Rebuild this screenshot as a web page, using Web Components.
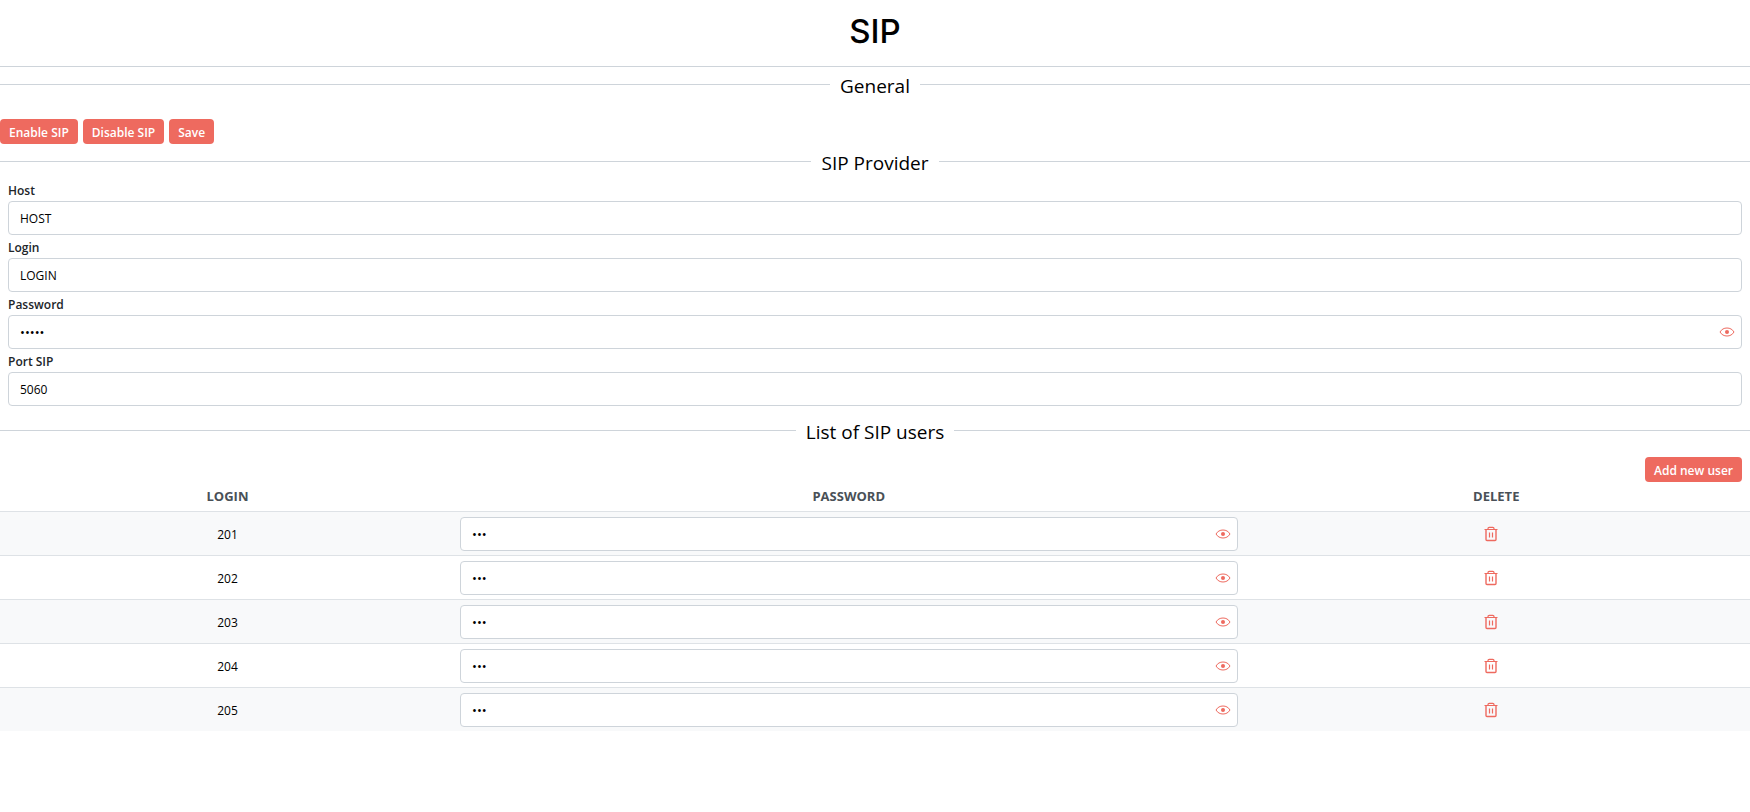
<!DOCTYPE html>
<html lang="en">
<head>
<meta charset="utf-8">
<meta name="viewport" content="width=device-width, initial-scale=1">
<title>SIP</title>
<style>
    body {
        margin: 0;
        background: #ffffff;
        color: #000000;
        font-family: 'Open Sans', 'Noto Sans', sans-serif;
        font-size: 12px;

        --accent:      #ee6a5f;
        --line:        #ced4da;
        --rowLine:     #dee2e6;
        --rowStripe:   #f8f9fa;
        --labelColour: #212529;
        --headColour:  #495057;
    }
</style>
</head>
<body>

<sip-page></sip-page>

<script>
// ╭───────────────────────────────────────────────────────╮
// │                        HELPERS                        │
// ╰───────────────────────────────────────────────────────╯
function makeTemplate(html) {
    const template = document.createElement('template');
    template.innerHTML = html;
    return template;
}

function attach(element, template) {
    element.attachShadow({ mode: "open" });
    element.shadowRoot.appendChild(template.content.cloneNode(true));
}

// ╭───────────────────────────────────────────────────────╮
// │                        BUTTON                         │
// ╰───────────────────────────────────────────────────────╯
const buttonTemplate = makeTemplate(/* html */`
    <style>
        :host {
            display: block;
        }

        button {
            /* Size  */
            display: block;
            height: 25px;
            padding: 2px 9px 0;
            border: 0;
            border-radius: 4px;

            /* Presentation  */
            background: var(--accent);
            color: #ffffff;
            font: inherit;
            font-weight: 600;
            white-space: nowrap;
            cursor: pointer;
        }

        button:hover {
            filter: brightness(0.95);
        }
    </style>
    <button type="button"><slot></slot></button>
`);

class ActionButton extends HTMLElement {
    constructor() {
        super();
        attach(this, buttonTemplate);
    }
}
customElements.define("action-button", ActionButton);

// ╭───────────────────────────────────────────────────────╮
// │                    SECTION DIVIDER                    │
// ╰───────────────────────────────────────────────────────╯
const dividerTemplate = makeTemplate(/* html */`
    <style>
        :host {
            /* Position */
            display: flex;
            align-items: center;
            gap: 10px;
        }

        :host::before,
        :host::after {
            content: "";
            flex: 1;
            border-top: 1px solid var(--line);
        }

        h2 {
            margin: 0;
            padding-top: 4px;
            font-size: 19px;
            font-weight: 400;
            line-height: 30px;
        }
    </style>
    <h2><slot></slot></h2>
`);

class SectionDivider extends HTMLElement {
    constructor() {
        super();
        attach(this, dividerTemplate);
    }
}
customElements.define("section-divider", SectionDivider);

// ╭───────────────────────────────────────────────────────╮
// │                      TEXT FIELD                       │
// ╰───────────────────────────────────────────────────────╯
const fieldTemplate = makeTemplate(/* html */`
    <style>
        :host {
            display: block;
        }

        label {
            display: block;
            padding-top: 2px;
            color: var(--labelColour);
            font-weight: 600;
            line-height: 21px;
        }

        label[hidden],
        button[hidden] {
            display: none;
        }

        .box {
            /* Position */
            display: flex;
            align-items: center;

            /* Size  */
            box-sizing: border-box;
            height: 34px;
            padding-right: 4px;
            border: 1px solid var(--line);
            border-radius: 4px;

            /* Presentation  */
            background: #ffffff;
        }

        .box:focus-within {
            border-color: var(--accent);
        }

        input {
            flex: 1;
            min-width: 0;
            height: 100%;
            box-sizing: border-box;
            padding: 0 11px;
            border: 0;
            outline: 0;
            background: transparent;
            color: inherit;
            font: inherit;
        }

        input[type="password"] {
            font-size: 13px;
        }

        button {
            display: flex;
            align-items: center;
            justify-content: center;
            width: 20px;
            height: 20px;
            padding: 0;
            border: 0;
            background: transparent;
            color: var(--accent);
            cursor: pointer;
        }
    </style>
    <label for="input"></label>
    <div class="box">
        <input id="input" type="text" autocomplete="off">
        <button type="button" aria-label="Show password" hidden>
            <svg width="16" height="16" viewBox="0 0 16 16" fill="none">
                <path d="M1 8C2.600 5.300 5 4 8 4S13.400 5.300 15 8C13.400 10.700 11 12 8 12S2.600 10.700 1 8Z" stroke="currentColor"/>
                <circle cx="8" cy="8" r="2" fill="currentColor"/>
            </svg>
        </button>
    </div>
`);

class SipField extends HTMLElement {
    constructor() {
        super();
        attach(this, fieldTemplate);
    }

    connectedCallback() {
        const label = this.shadowRoot.querySelector("label");
        const input = this.shadowRoot.querySelector("input");
        const toggle = this.shadowRoot.querySelector("button");

        // label
        label.textContent = this.getAttribute("label");
        if (this.hasAttribute("nolabel")) {
            label.hidden = true;
            input.setAttribute("aria-label", this.getAttribute("label"));
        }

        input.value = this.getAttribute("value");

        // password
        if (this.hasAttribute("password")) {
            input.type = "password";
            toggle.hidden = false;
            toggle.addEventListener("click", () => {
                input.type = input.type === "password" ? "text" : "password";
            });
        }
    }
}
customElements.define("sip-field", SipField);

// ╭───────────────────────────────────────────────────────╮
// │                      USERS TABLE                      │
// ╰───────────────────────────────────────────────────────╯
const tableTemplate = makeTemplate(/* html */`
    <style>
        :host {
            display: block;
        }

        table {
            width: 100%;
            table-layout: fixed;
            border-collapse: separate;
            border-spacing: 0;
            text-align: center;
        }

        .login    { width: 26%; }
        .password { width: 45%; }
        .delete   { width: 29%; }

        th {
            padding: 0;
            color: var(--headColour);
            font-size: 13px;
            font-weight: 700;
            line-height: 29px;
        }

        td {
            padding: 5px 5px 4px;
            border-top: 1px solid var(--rowLine);
        }

        sip-field {
            text-align: left;
        }

        tbody tr:nth-child(odd) {
            background: var(--rowStripe);
        }

        button {
            display: block;
            width: 18px;
            height: 18px;
            margin: 0 auto;
            padding: 0;
            border: 0;
            background: transparent;
            color: var(--accent);
            cursor: pointer;
        }

        .trash {
            padding-right: 15px;
        }

        svg {
            display: block;
            margin: 0 auto;
        }
    </style>
    <table>
        <thead>
            <tr>
                <th class="login" scope="col">LOGIN</th>
                <th class="password" scope="col">PASSWORD</th>
                <th class="delete" scope="col">DELETE</th>
            </tr>
        </thead>
        <tbody></tbody>
    </table>
`);

const rowTemplate = makeTemplate(/* html */`
    <tr>
        <td class="name"></td>
        <td><sip-field password nolabel></sip-field></td>
        <td class="trash">
            <button type="button">
                <svg width="14" height="16" viewBox="0 0 14 16" fill="none" stroke="currentColor" stroke-width="1.200">
                    <path d="M0.500 3.500H13.500M4 3.500V2.500Q4 1.300 5.200 1.300H8.800Q10 1.300 10 2.500V3.500"/>
                    <path d="M2 3.500V13.500Q2 14.500 3 14.500H11Q12 14.500 12 13.500V3.500" stroke-width="1.400"/>
                    <path d="M5.500 6.500V11.500M8.500 6.500V11.500"/>
                </svg>
            </button>
        </td>
    </tr>
`);

class SipUsers extends HTMLElement {
    constructor() {
        super();
        attach(this, tableTemplate);
    }

    connectedCallback() {
        this.getAttribute("users").split(" ").forEach(login => this.addUser(login));
    }

    addUser(login) {
        const row = rowTemplate.content.cloneNode(true).querySelector("tr");
        const field = row.querySelector("sip-field");
        const button = row.querySelector("button");

        row.querySelector(".name").textContent = login;
        field.setAttribute("label", "Password " + login);
        field.setAttribute("value", login);
        button.setAttribute("aria-label", "Delete " + login);
        button.addEventListener("click", () => row.remove());

        this.shadowRoot.querySelector("tbody").appendChild(row);
    }
}
customElements.define("sip-users", SipUsers);

// ╭───────────────────────────────────────────────────────╮
// │                         PAGE                          │
// ╰───────────────────────────────────────────────────────╯
const pageTemplate = makeTemplate(/* html */`
    <style>
        :host {
            display: block;
        }

        h1 {
            margin: 0;
            padding: 11px 0 15px;
            border-bottom: 1px solid var(--line);
            font-family: 'Inter', sans-serif;
            font-size: 33px;
            font-weight: 500;
            line-height: 40px;
            text-align: center;
        }

        .actions {
            display: flex;
            gap: 5px;
            padding-top: 18px;
        }

        .fields {
            padding: 0 8px 7px;
        }

        .add {
            display: flex;
            justify-content: flex-end;
            padding: 10px 8px 0;
        }
    </style>
    <header><h1>SIP</h1></header>
    <main>
        <section-divider>General</section-divider>
        <div class="actions">
            <action-button>Enable SIP</action-button>
            <action-button>Disable SIP</action-button>
            <action-button>Save</action-button>
        </div>

        <section-divider>SIP Provider</section-divider>
        <div class="fields">
            <sip-field label="Host" value="HOST"></sip-field>
            <sip-field label="Login" value="LOGIN"></sip-field>
            <sip-field label="Password" value="admin" password></sip-field>
            <sip-field label="Port SIP" value="5060"></sip-field>
        </div>

        <section-divider>List of SIP users</section-divider>
        <div class="add">
            <action-button>Add new user</action-button>
        </div>
        <sip-users users="201 202 203 204 205"></sip-users>
    </main>
`);

class SipPage extends HTMLElement {
    constructor() {
        super();
        attach(this, pageTemplate);
    }

    connectedCallback() {
        const users = this.shadowRoot.querySelector("sip-users");
        let next = 206;
        this.shadowRoot.querySelector(".add action-button")
            .addEventListener("click", () => users.addUser(String(next++)));
    }
}
customElements.define("sip-page", SipPage);
</script>
</body>
</html>
